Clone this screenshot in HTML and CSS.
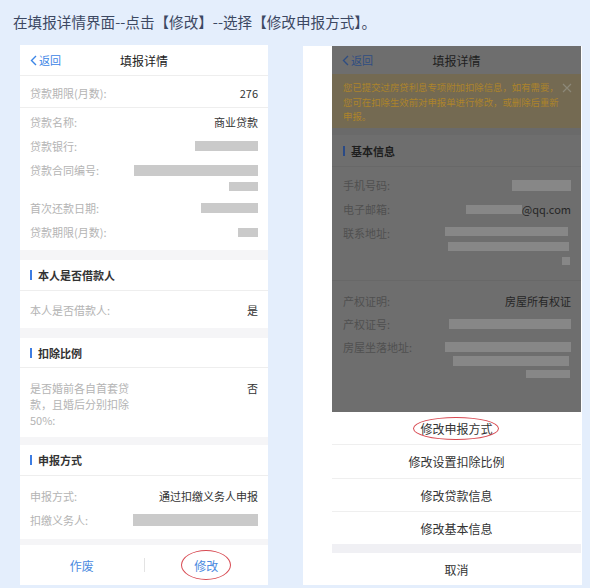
FILE: index.html
```html
<!DOCTYPE html>
<html lang="zh-CN">
<head>
    <meta charset="UTF-8">
    <meta name="viewport" content="width=device-width, initial-scale=1.0">
    <title>修改申报方式</title>
    <link rel="stylesheet" href="styles.css">
</head>
<body>

    <div class="title">在填报详情界面--点击【修改】--选择【修改申报方式】。</div>

    <div class="shots">

        <!-- 左图：填报详情 -->
        <div class="phone">
            <div class="nav">
                <span class="back">
                    <svg width="7" height="11" viewBox="0 0 7 11"><path d="M6 1 L1.5 5.5 L6 10" fill="none" stroke="currentColor" stroke-width="1.4"/></svg>
                    返回
                </span>
                <span class="nav-title">填报详情</span>
                <span></span>
            </div>

            <div class="row first">
                <span class="label">贷款期限(月数):</span>
                <span class="value">276</span>
            </div>

            <div class="group g1">
                <div class="row">
                    <span class="label">贷款名称:</span>
                    <span class="value">商业贷款</span>
                </div>
                <div class="row">
                    <span class="label">贷款银行:</span>
                    <span class="blur" style="width:63px"></span>
                </div>
                <div class="row tall">
                    <span class="label">贷款合同编号:</span>
                    <div class="bars">
                        <span class="blur" style="width:124px;height:11px"></span>
                        <span class="blur" style="width:29px;height:9px"></span>
                    </div>
                </div>
                <div class="row">
                    <span class="label">首次还款日期:</span>
                    <span class="blur" style="width:57px"></span>
                </div>
                <div class="row">
                    <span class="label">贷款期限(月数):</span>
                    <span class="blur" style="width:20px;height:9px"></span>
                </div>
            </div>

            <div class="gap"></div>
            <div class="sec">本人是否借款人</div>
            <div class="row single">
                <span class="label">本人是否借款人:</span>
                <span class="value">是</span>
            </div>

            <div class="gap"></div>
            <div class="sec short">扣除比例</div>
            <div class="row multi">
                <span class="label">是否婚前各自首套贷<br>款，且婚后分别扣除<br>50%:</span>
                <span class="value">否</span>
            </div>

            <div class="gap small"></div>
            <div class="sec">申报方式</div>
            <div class="group g2">
                <div class="row">
                    <span class="label">申报方式:</span>
                    <span class="value">通过扣缴义务人申报</span>
                </div>
                <div class="row">
                    <span class="label">扣缴义务人:</span>
                    <span class="blur" style="width:125px;height:12px"></span>
                </div>
            </div>

            <div class="gap tiny"></div>
            <div class="footer">
                <span class="foot-btn">作废</span>
                <span class="divider"></span>
                <span class="foot-btn"><span class="circled small-ring">修改</span></span>
            </div>
        </div>

        <!-- 右图：弹出修改菜单 -->
        <div class="card">
            <div class="phone dark">
                <div class="dim">
                    <div class="nav">
                        <span class="back">
                            <svg width="7" height="11" viewBox="0 0 7 11"><path d="M6 1 L1.5 5.5 L6 10" fill="none" stroke="currentColor" stroke-width="1.4"/></svg>
                            返回
                        </span>
                        <span class="nav-title">填报详情</span>
                        <span></span>
                    </div>
                    <div class="notice">
                        <p>您已提交过房贷利息专项附加扣除信息，如有需要，<br>您可在扣除生效前对申报单进行修改，或删除后重新<br>申报。</p>
                        <svg class="close" width="10" height="10" viewBox="0 0 10 10"><path d="M1 1 L9 9 M9 1 L1 9" stroke="currentColor" stroke-width="1.2"/></svg>
                    </div>
                    <div class="gap dgap"></div>
                    <div class="sec">基本信息</div>

                    <div class="group d1">
                        <div class="row">
                            <span class="label">手机号码:</span>
                            <span class="blur" style="width:59px;height:11px"></span>
                        </div>
                        <div class="row">
                            <span class="label">电子邮箱:</span>
                            <span class="value"><span class="blur" style="width:56px;height:9px"></span>@qq.com</span>
                        </div>
                        <div class="row addr">
                            <span class="label">联系地址:</span>
                            <div class="bars">
                                <span class="blur" style="width:123px;height:9px;margin-right:3px"></span>
                                <span class="blur" style="width:121px;height:9px;margin-right:2px"></span>
                                <span class="blur" style="width:8px;height:8px;margin-right:1px"></span>
                            </div>
                        </div>
                    </div>

                    <div class="group d2">
                        <div class="row">
                            <span class="label">产权证明:</span>
                            <span class="value">房屋所有权证</span>
                        </div>
                        <div class="row">
                            <span class="label">产权证号:</span>
                            <span class="blur" style="width:122px;height:10px"></span>
                        </div>
                        <div class="row addr2">
                            <span class="label">房屋坐落地址:</span>
                            <div class="bars">
                                <span class="blur" style="width:126px;height:10px"></span>
                                <span class="blur" style="width:116px;height:10px;margin-right:2px"></span>
                                <span class="blur" style="width:44px;height:8px;margin-right:1px"></span>
                            </div>
                        </div>
                    </div>
                </div>

                <div class="sheet">
                    <div class="item first-item"><span class="circled big-ring">修改申报方式</span></div>
                    <div class="item tall-item">修改设置扣除比例</div>
                    <div class="item">修改贷款信息</div>
                    <div class="item">修改基本信息</div>
                    <div class="sheet-gap"></div>
                    <div class="item cancel">取消</div>
                </div>
            </div>
        </div>

    </div>

</body>
</html>
```

FILE: styles.css
```css
* {
    box-sizing: border-box;
    margin: 0;
    padding: 0;
}

body {
    background-color: #e4eefc;
    font-family: "Noto Sans CJK SC", "Noto Sans", sans-serif;
    width: 590px;
    height: 588px;
    overflow: hidden;
}

.title {
    height: 45px;
    padding: 12px 0 0 13px;
    font-size: 14.6px;
    line-height: 20px;
    color: #3c4862;
}

.shots {
    display: flex;
    align-items: flex-start;
    padding-left: 20px;
}

/* phone screens */
.phone {
    background: #fff;
    width: 248px;
    height: 540px;
    display: flex;
    flex-direction: column;
}

.nav {
    height: 31px;
    border-bottom: 1px solid #eeeeee;
    display: grid;
    grid-template-columns: 1fr auto 1fr;
    align-items: center;
    padding: 0 10px;
    font-size: 12px;
    color: #222;
}

.back {
    display: flex;
    align-items: center;
    gap: 2px;
    font-size: 11px;
    color: #3b85e6;
}

.row {
    display: flex;
    justify-content: space-between;
    align-items: center;
    height: 24px;
    padding: 0 10px;
    font-size: 11px;
    line-height: 24px;
}

.label {
    color: #b4b4b4;
}

.value {
    color: #333;
    display: flex;
    align-items: center;
}

.blur {
    display: inline-block;
    height: 10px;
    background: #cacaca;
}

.bars {
    display: flex;
    flex-direction: column;
    align-items: flex-end;
}

.row.first {
    height: 32px;
    padding-top: 2px;
    border-bottom: 1px solid #eeeeee;
}

.g1 {
    padding: 2px 0 6px;
}

.row.tall {
    height: 38px;
    align-items: flex-start;
}

.row.tall .bars {
    padding-top: 7px;
    gap: 6px;
}

.gap {
    height: 10px;
    background: #f5f5f7;
}

.gap.small {
    height: 8px;
}

.gap.tiny {
    height: 6px;
}

.sec {
    height: 31px;
    border-bottom: 1px solid #eeeeee;
    display: flex;
    align-items: center;
    padding-left: 10px;
    font-size: 11px;
    font-weight: bold;
    color: #333;
}

.sec::before {
    content: "";
    width: 2px;
    height: 10px;
    background: #3d7de3;
    margin-right: 6px;
}

.sec.short {
    height: 30px;
}

.row.single {
    height: 37px;
}

.row.multi {
    height: 69px;
    align-items: flex-start;
    padding-top: 12px;
    line-height: 16px;
}

.g2 {
    padding: 8px 0 7px;
}

.footer {
    height: 40px;
    display: flex;
    align-items: center;
}

.foot-btn {
    flex: 1;
    text-align: center;
    font-size: 12px;
    color: #4a8ae0;
}

.divider {
    width: 1px;
    height: 14px;
    background: #e3e3e3;
}

/* red marker rings */
.circled {
    position: relative;
    display: inline-block;
}

.circled::after {
    content: "";
    position: absolute;
    border: 1.5px solid #d84a52;
    border-radius: 50%;
}

.small-ring::after {
    top: -7px;
    bottom: -6px;
    left: -13px;
    right: -13px;
}

.big-ring::after {
    top: -3px;
    bottom: -3px;
    left: -7px;
    right: -6px;
}

/* right screenshot */
.card {
    background: #fff;
    width: 279px;
    height: 539px;
    margin-left: 35px;
    margin-top: 1px;
    padding-left: 29px;
}

.phone.dark {
    width: 249px;
    height: 539px;
}

.dim {
    flex: 1;
    background: #6e6e6e;
    display: flex;
    flex-direction: column;
}

.dark .nav {
    height: 28px;
    border-bottom: none;
    color: #1e1e1e;
}

.dark .back {
    color: #2e4d82;
}

.dark .row {
    padding: 0 10px 0 11px;
}

.dark .label {
    color: #505050;
}

.dark .value {
    color: #262626;
}

.dark .blur {
    background: #878787;
}

.notice {
    height: 54px;
    background: #746a52;
    display: flex;
    justify-content: space-between;
    padding: 6px 9px 0 11px;
}

.notice p {
    font-size: 9.4px;
    line-height: 14.5px;
    color: #ad842b;
}

.close {
    margin-top: 3px;
    color: #8c8878;
}

.dgap {
    height: 7px;
    background: #6a6a6a;
}

.dark .sec {
    height: 32px;
    border-bottom: 1px solid #686868;
    padding-left: 11px;
    color: #1e1e1e;
}

.dark .sec::before {
    background: #2a4a86;
}

.d1 {
    padding: 6px 0 10px;
    border-bottom: 1px solid #686868;
}

.row.addr {
    height: 49px;
    align-items: flex-start;
}

.row.addr .bars {
    padding-top: 6px;
    gap: 6px;
}

.d2 {
    padding-top: 8px;
}

.d2 .row {
    height: 23px;
}

.row.addr2 {
    height: 50px;
    align-items: flex-start;
}

.row.addr2 .bars {
    padding-top: 7px;
    gap: 4px;
}

.sheet {
    height: 173px;
    background: #fff;
    display: flex;
    flex-direction: column;
}

.item {
    height: 33px;
    border-top: 1px solid #efefef;
    display: flex;
    align-items: center;
    justify-content: center;
    font-size: 12px;
    color: #333;
}

.item.first-item {
    height: 32px;
    border-top: none;
}

.item.tall-item {
    height: 34px;
}

.sheet-gap {
    height: 9px;
    background: #f0f0f4;
}

.item.cancel {
    height: 32px;
    border-top: none;
}
```
